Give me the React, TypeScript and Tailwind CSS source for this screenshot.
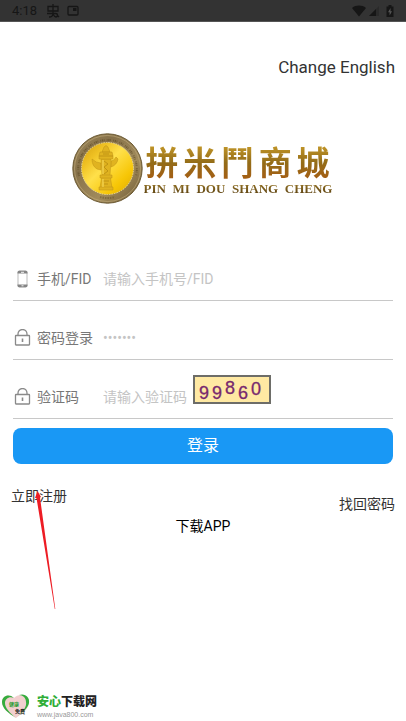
import { useState } from 'react'
import type { ReactNode } from 'react'

const CAPTCHA = [
  { char: '9', x: 6,  y: 24 },
  { char: '9', x: 19, y: 24 },
  { char: '8', x: 32, y: 19 },
  { char: '6', x: 45, y: 24 },
  { char: '0', x: 58, y: 20 },
]

function StatusBar() {
  return (
    <div className="h-[22px] bg-[#333333] border-b border-[#555555] px-3 flex items-center text-[#161616]">
      <span className="text-[13px] leading-4">4:18</span>
      <svg className="ml-2 w-4 h-4" viewBox="0 0 16 16" fill="none" stroke="currentColor" strokeWidth="1.3">
        <path d="M3 3.500h10v4.500H3zM8 1v9.500q0 3.500-4 3.500M2 10.500h8.500q2 0 2 1.700T11 14q-1.500 0-3-3M12 12l2 2" />
      </svg>
      <svg className="ml-[6px] w-3 h-3" viewBox="0 0 12 12">
        <rect x="1" y="1.500" width="10" height="8.500" rx="1" fill="none" stroke="currentColor" strokeWidth="1.300" />
        <rect x="6" y="3" width="3.500" height="3" fill="currentColor" />
      </svg>
      <div className="flex-1" />
      <svg className="w-[14px] h-[14px]" viewBox="0 0 14 14">
        <path d="M0 4C4 .8 10 .8 14 4L7 12.500z" fill="currentColor" />
      </svg>
      <svg className="ml-[2px] w-3 h-3" viewBox="0 0 12 12">
        <path d="M11 1V11H1z" fill="currentColor" opacity=".3" />
        <path d="M8 4V11H1z" fill="currentColor" />
      </svg>
      <svg className="ml-[6px] w-2 h-3" viewBox="0 0 8 12">
        <path d="M2.500 0h3v1.500H7.500V12H.5V1.500h2z" fill="currentColor" />
        <path d="M4.600 3 2 7.300h1.600V10.500L6 6.200H4.500z" fill="#555555" />
      </svg>
    </div>
  )
}

function Coin() {
  return (
    <svg className="w-[71px] h-[71px] shrink-0" viewBox="0 0 71 71">
      <defs>
        <linearGradient id="rim" x1="0" y1="0" x2="1" y2="1">
          <stop offset="0" stopColor="#a08b5b" />
          <stop offset=".3" stopColor="#86714a" />
          <stop offset=".65" stopColor="#a18b5c" />
          <stop offset="1" stopColor="#6b5732" />
        </linearGradient>
        <linearGradient id="face" x1="0" y1="0" x2="1" y2="1">
          <stop offset="0" stopColor="#d39d0d" />
          <stop offset=".25" stopColor="#efc224" />
          <stop offset=".45" stopColor="#ffe04a" />
          <stop offset=".75" stopColor="#f7c606" />
          <stop offset="1" stopColor="#dca800" />
        </linearGradient>
      </defs>
      <circle cx="35.500" cy="35.500" r="34.700" fill="url(#rim)" stroke="#6b5932" />
      <circle cx="35.500" cy="35.500" r="33" fill="none" stroke="#c2ad7c" strokeWidth=".6" />
      <path d="M7 43A29.300 29.300 0 1 1 64 43" fill="none" stroke="#55441f" strokeWidth="2" strokeDasharray=".8 .8 1.300 .7 .7 2.200" opacity=".55" />
      <path d="M28 64Q35.500 66 43 64" fill="none" stroke="#55441f" strokeWidth="2" strokeDasharray="1.500 1" opacity=".4" />
      <circle cx="35.500" cy="35.500" r="26" fill="url(#face)" stroke="#e9d99a" strokeWidth="1" strokeDasharray="1.500 1" />
      <g fill="#e0b320" stroke="#bd9115" strokeWidth=".5">
        <path d="M29 30Q24 30 20 26Q20 33 25 36L29 37zM39 28Q42 28 44 24L46 26Q45 32 39 34z" />
        <path d="M29 26h10l-1 16 2 13H28l2-13z" />
        <path d="M27 23h14v3H27zM28 19h12l1 4H27zM32 14q2-3 4 0l2 5h-8z" />
        <path d="M28 42h12v3H28zM27 54h14v3H27z" />
      </g>
      <path d="M32 28l4 3-4 3 4 4-4 3M31 48h6M31 21h6M32 51h4" fill="none" stroke="#b1860e" strokeWidth=".7" />
      <path d="M31 27v14M31 46v8" stroke="#ffe772" strokeWidth=".8" />
    </svg>
  )
}

function Logo() {
  return (
    <div className="flex justify-center items-center pr-[2px]">
      <Coin />
      <div className="w-[190px] pt-[2px]">
        <div className="px-[3px] flex justify-between font-['Noto_Sans_CJK_TC',sans-serif] text-[33px] leading-9 font-bold">
          {['拼', '米', '鬥', '商', '城'].map(char => (
            <span key={char} className="text-transparent bg-clip-text bg-linear-to-b from-[#c99d2b] via-[#936c18] via-55% to-[#a55e14]">{char}</span>
          ))}
        </div>
        <div className="mt-[2px] pl-[1px] flex justify-between font-['Liberation_Serif',serif] text-[13px] leading-4 font-bold">
          {['PIN', 'MI', 'DOU', 'SHANG', 'CHENG'].map(word => (
            <span key={word} className="text-transparent bg-clip-text bg-linear-to-b from-[#a5822d] to-[#4d350c]">{word}</span>
          ))}
        </div>
      </div>
    </div>
  )
}

function PhoneIcon() {
  return (
    <svg className="w-[18px] h-[18px] shrink-0" viewBox="0 0 18 18">
      <rect x="5" y="1" width="9" height="16" rx="1.500" fill="none" stroke="#bbbbbb" />
      <path d="M4.500 3.500V2.500Q4.500 1 6 .8h7q1.500 0 1.500 1.700v1zM4.500 14.500v1Q4.500 17 6 17.200h7q1.500 0 1.500-1.700v-1z" fill="#858585" />
      <path d="M8 2.300h3M8.500 15.800h2" stroke="#ffffff" strokeWidth=".9" />
    </svg>
  )
}

function LockIcon() {
  return (
    <svg className="w-[18px] h-[18px] shrink-0" viewBox="0 0 18 18" fill="none" stroke="#8a8a8a" strokeWidth="1.300">
      <rect x="2.500" y="6.500" width="14" height="9.500" rx=".5" />
      <path d="M5 6.500V5a4.500 4.500 0 0 1 9 0v1.500" />
      <path d="M9.500 9.500v3.500" strokeWidth="1.600" />
    </svg>
  )
}

function Captcha() {
  return (
    <svg className="w-[78px] h-[29px] shrink-0" viewBox="0 0 78 29" role="img" aria-label="验证码">
      <rect x="1" y="1" width="76" height="27" fill="#ffe9a3" stroke="#6d6d68" strokeWidth="2" />
      {CAPTCHA.map(({ char, x, y }) => (
        <text key={x} x={x} y={y} fill="#78286e" stroke="#78286e" strokeWidth=".3"
          className="font-['Liberation_Sans',sans-serif] text-[18px]">{char}</text>
      ))}
    </svg>
  )
}

interface FieldProps {
  id: string
  label: string
  placeholder: string
  icon: ReactNode
  type?: string
  children?: ReactNode
}

function Field({ id, label, placeholder, icon, type = 'text', children }: FieldProps) {
  const [value, setValue] = useState('')

  return (
    <div className="h-[59px] border-b border-[#c8c8c8] flex items-center">
      <div className={`pt-4 flex items-center ${children ? '' : 'flex-1'}`}>
        {icon}
        <label htmlFor={id} className="ml-[6px] w-[66px] shrink-0 whitespace-nowrap text-[#777777]">{label}</label>
        <input id={id} type={type} value={value} placeholder={placeholder} onChange={e => setValue(e.target.value)}
          className={`min-w-0 bg-transparent outline-none placeholder:text-[#c4c4c4] ${children ? 'w-[90px]' : 'flex-1'}`} />
      </div>
      {children}
    </div>
  )
}

export default function App() {
  return (
    <div className="relative min-h-screen flex flex-col bg-white font-[Roboto,'Noto_Sans_CJK_SC',sans-serif] text-[14px] leading-5 text-[#333333]">
      <StatusBar />

      <header className="pt-[33px] px-[11px] flex justify-end">
        <a href="#english" className="text-[17px] leading-6">Change English</a>
      </header>

      <main className="pt-[54px]">
        <Logo />

        <form className="pt-[38px] px-[13px]" onSubmit={e => e.preventDefault()}>
          <Field id="phone" label="手机/FID" placeholder="请输入手机号/FID" icon={<PhoneIcon />} />
          <Field id="password" type="password" label="密码登录" placeholder="•••••••" icon={<LockIcon />} />
          <Field id="captcha" label="验证码" placeholder="请输入验证码" icon={<LockIcon />}>
            <Captcha />
          </Field>
          <button type="submit" className="mt-[9px] w-full h-9 rounded-lg bg-[#1998f5] text-white text-[16px]">登录</button>
        </form>

        <div className="pt-[22px] px-[11px] flex justify-between">
          <a href="#register">立即注册</a>
          <a href="#reset" className="mt-2">找回密码</a>
        </div>
        <div className="pt-[2px] text-center text-black">
          <a href="#download">下载APP</a>
        </div>
      </main>

      {/* pointer to the register link */}
      <svg className="absolute left-[34px] top-[490px] w-6 h-[120px] pointer-events-none" viewBox="0 0 24 120">
        <path d="M3.500 1 7 7 6 7.500 21.300 119 20.800 119 2.500 8 1 8z" fill="#ed1c24" />
      </svg>

      <footer className="mt-auto pb-[2px] pl-[2px] flex items-center gap-[7px]">
        <svg className="w-7 h-[26px]" viewBox="0 0 28 26">
          <path d="M14 25C6 20 0 15 0 9 0 3 7 0 12 5c4-5 14-4 15 3 1 8-7 12-13 17z" fill="#f2cfcf" />
          <path d="M14 25C6 20 0 15 0 9 0 3 7 0 12 5 7 3 3 6 3 10c0 5 5 10 11 15zM17 2c6-2 11 2 10 8-1 5-6 9-11 13 5-5 9-9 8-14 0-4-3-7-7-7z" fill="#35ac3d" />
          <text x="7" y="13" fill="#259b2d" className="font-['Noto_Sans_CJK_SC',sans-serif] text-[5px] font-bold">健康</text>
          <text x="13" y="20" fill="#222222" className="font-['Noto_Sans_CJK_SC',sans-serif] text-[5px] font-bold">免费</text>
        </svg>
        <div>
          <div className="text-[12px] leading-4 font-black text-[#222222]"><span className="text-[#2fae37]">安心</span>下载网</div>
          <div className="font-['Liberation_Sans',sans-serif] text-[7px] leading-[9px] text-[#999999]">www.java800.com</div>
        </div>
      </footer>
    </div>
  )
}
